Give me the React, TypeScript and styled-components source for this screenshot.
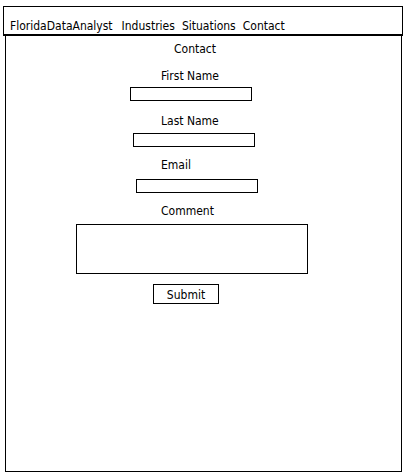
import React from 'react';
import styled, { createGlobalStyle } from 'styled-components';

const GlobalStyle = createGlobalStyle`
  html, body {
    margin: 0;
    padding: 0;
    background: #ffffff;
  }
  body {
    font-family: "Liberation Sans Narrow", "DejaVu Sans Condensed", "Liberation Sans", sans-serif;
    font-size: 12px;
    color: #000;
  }
`;

const Page = styled.div`
  width: 408px;
  height: 476px;
  padding-top: 6px;
  box-sizing: border-box;
`;

const Header = styled.header`
  margin-left: 3px;
  width: 400px;
  height: 30px;
  box-sizing: border-box;
  border: 1px solid #000;
  border-bottom: 2px solid #000;
  display: flex;
  align-items: flex-end;
  gap: 7px;
  padding: 0 0 0 6px;
`;

const NavLink = styled.span<{ $gap?: number }>`
  line-height: 15px;
  margin-right: ${(p) => p.$gap ?? 0}px;
`;

const Body = styled.main`
  margin-left: 5px;
  width: 397px;
  height: 436px;
  box-sizing: border-box;
  border: 1px solid #000;
  border-top: none;
  display: flex;
  flex-direction: column;
`;

const Title = styled.div`
  text-align: center;
  line-height: 15px;
  margin-top: 6px;
  padding-right: 17px;
`;

const Form = styled.form`
  display: flex;
  flex-direction: column;
  align-items: flex-start;
`;

const Label = styled.label<{ $top: number }>`
  display: block;
  line-height: 15px;
  margin-top: ${(p) => p.$top}px;
  margin-left: 155px;
`;

const Field = styled.div<{ $left: number; $top: number }>`
  margin-left: ${(p) => p.$left}px;
  margin-top: ${(p) => p.$top}px;
  width: 122px;
  height: 14px;
  box-sizing: border-box;
  border: 1px solid #000;
`;

const Comment = styled.div`
  margin-left: 70px;
  margin-top: 5px;
  width: 232px;
  height: 50px;
  box-sizing: border-box;
  border: 1px solid #000;
`;

const Submit = styled.button`
  margin-left: 147px;
  margin-top: 10px;
  width: 66px;
  height: 20px;
  box-sizing: border-box;
  border: 1px solid #000;
  background: #fff;
  font: inherit;
  line-height: 15px;
  padding: 3px 0 0 0;
  text-align: center;
  color: #000;
`;

export default function App() {
  return (
    <>
      <GlobalStyle />
      <Page>
        <Header>
          <NavLink $gap={2}>FloridaDataAnalyst</NavLink>
          <NavLink>Industries</NavLink>
          <NavLink>Situations</NavLink>
          <NavLink>Contact</NavLink>
        </Header>
        <Body>
          <Title>Contact</Title>
          <Form onSubmit={(ev) => ev.preventDefault()}>
            <Label $top={12}>First Name</Label>
            <Field $left={124} $top={3} />
            <Label $top={13}>Last Name</Label>
            <Field $left={127} $top={4} />
            <Label $top={11}>Email</Label>
            <Field $left={130} $top={6} />
            <Label $top={11}>Comment</Label>
            <Comment />
            <Submit type="submit">Submit</Submit>
          </Form>
        </Body>
      </Page>
    </>
  );
}
